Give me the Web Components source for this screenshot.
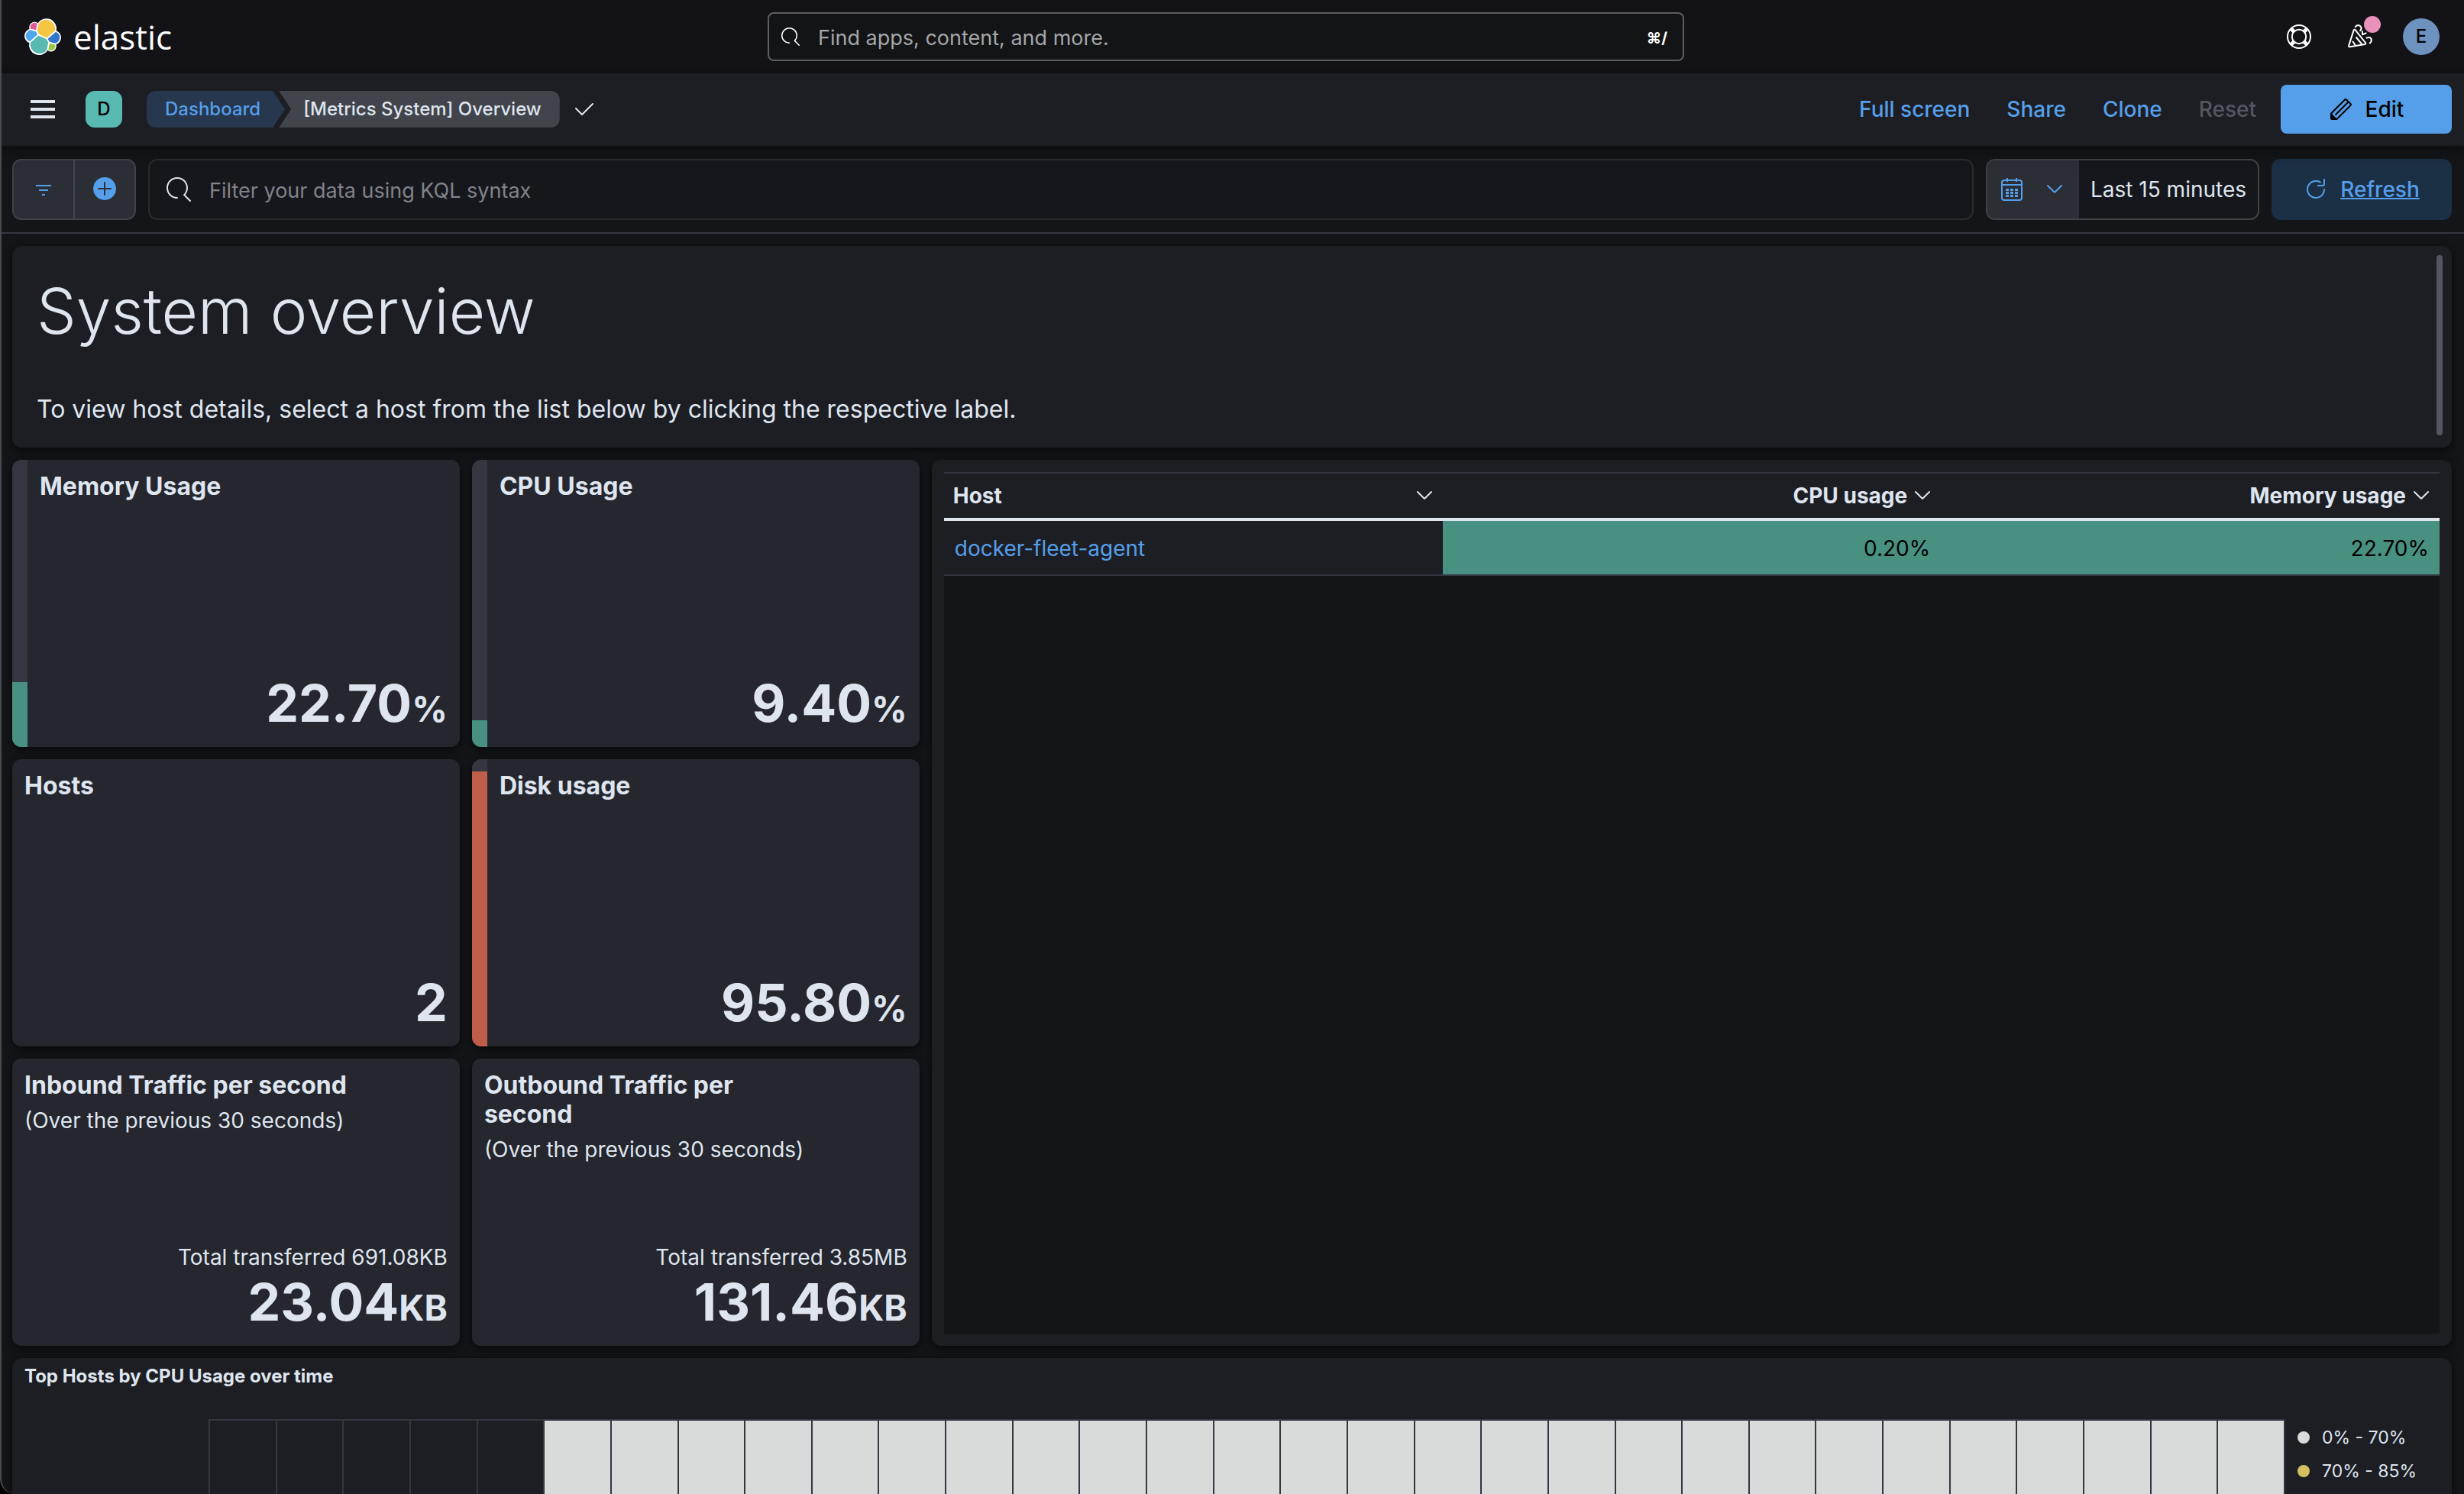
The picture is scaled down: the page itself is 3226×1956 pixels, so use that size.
<!DOCTYPE html>
<html lang="en">
<head>
<meta charset="utf-8">
<title>[Metrics System] Overview</title>
<style>
  :root {
    --page: #141519;
    --panel: #1d1e24;
    --tile: #25262e;
    --text: #dfe5ef;
    --link: #559fea;
    --line: #343741;
    --good: #489181;
    --bad: #bf5d4b;
  }
  html, body { margin: 0; height: 100%; }
  body {
    overflow: hidden;
    background: var(--page);
    color: var(--text);
    font-family: Inter, "Liberation Sans", sans-serif;
    font-size: 28px;
    line-height: 40px;
  }
</style>
</head>
<body>
<dashboard-app></dashboard-app>

<script>
const define = (name, markup, setup) => {
  const template = document.createElement('template');
  template.innerHTML = markup;
  customElements.define(name, class extends HTMLElement {
    constructor() {
      super();
      this.attachShadow({ mode: 'open' }).append(template.content.cloneNode(true));
    }
    connectedCallback() { if (setup) setup(this, this.shadowRoot); }
  });
};

const controls = `
  *, *::before, *::after { box-sizing: border-box; }
  button, input { font: inherit; color: inherit; background: none; border: 0; margin: 0; padding: 0; }
  button { display: flex; align-items: center; justify-content: center; cursor: pointer; }
  input { outline: 0; min-width: 0; padding-top: 4px; font-size: 27px; }
`;

const icons = {
  elastic: ['0 0 32 32', `
    <path fill="#fff" d="M32 16.77a6.334 6.334 0 00-1.14-3.63 6.298 6.298 0 00-3.005-2.34 9.098 9.098 0 00-.873-5.965A9.05 9.05 0 0022.56.746a9.007 9.007 0 00-6.014-.226 9.04 9.04 0 00-4.79 3.656 4.795 4.795 0 00-5.803-.02 4.85 4.85 0 00-1.596 2.34 4.868 4.868 0 00.03 2.838 6.365 6.365 0 00-3.14 2.334A6.39 6.39 0 000 15.379a6.34 6.34 0 001.145 3.644 6.304 6.304 0 003.02 2.344 9.07 9.07 0 00.866 5.957 9.025 9.025 0 004.43 4.078 8.977 8.977 0 006.011.217 9.01 9.01 0 004.779-3.663 4.785 4.785 0 005.8.02 4.84 4.84 0 001.597-2.337 4.857 4.857 0 00-.027-2.835 6.352 6.352 0 003.138-2.333 6.377 6.377 0 001.242-3.701z"/>
    <path fill="#f4c644" d="M12.58 13.787l7.002 3.211 7.066-6.213a7.849 7.849 0 00.152-1.557 7.944 7.944 0 00-1.54-4.704 7.897 7.897 0 00-4.02-2.869 7.87 7.87 0 00-4.932.086 7.9 7.9 0 00-3.92 3.007l-1.174 6.118 1.367 2.92z"/>
    <path fill="#58bab2" d="M5.333 21.228A7.964 7.964 0 006.72 27.53a7.918 7.918 0 004.04 2.874 7.89 7.89 0 004.95-.097 7.92 7.92 0 003.926-3.03l1.166-6.102-1.556-2.985-7.03-3.211-6.883 6.25z"/>
    <path fill="#e0589a" d="M5.288 9.064l4.8 1.137L11.14 4.72a3.823 3.823 0 00-4.56-.028A3.864 3.864 0 005.13 6.714a3.86 3.86 0 00.158 2.35z"/>
    <path fill="#4fa5ee" d="M4.872 10.214a5.293 5.293 0 00-2.595 1.882 5.324 5.324 0 00-.142 6.124 5.287 5.287 0 002.505 1.997l6.733-6.101-1.235-2.65-5.266-1.252z"/>
    <path fill="#9bc83f" d="M20.873 27.277a3.736 3.736 0 002.285.785 3.783 3.783 0 003.101-1.63 3.813 3.813 0 00.451-3.484l-4.8-1.125-1.037 5.454z"/>
    <path fill="#3276cc" d="M21.848 20.563l5.28 1.238a5.34 5.34 0 002.622-1.938 5.37 5.37 0 001.013-3.106 5.31 5.31 0 00-.936-3.01 5.283 5.283 0 00-2.475-1.944l-6.904 6.07 1.4 2.69z"/>`],
  search: ['0 0 16 16', `<path d="M11.271 11.978l3.872 3.873a.502.502 0 00.708 0 .502.502 0 000-.708l-3.565-3.564c2.38-2.747 2.267-6.923-.342-9.532-2.73-2.73-7.17-2.73-9.898 0-2.728 2.729-2.728 7.17 0 9.9a6.955 6.955 0 004.949 2.05.5.5 0 000-1 5.96 5.96 0 01-4.242-1.757 6.01 6.01 0 010-8.486 6.004 6.004 0 018.484 0 6.01 6.01 0 010 8.486.5.5 0 00-.034.738z"/>`],
  help: ['0 0 32 32', `<g fill="none" stroke="currentColor"><circle cx="16" cy="16" r="15" stroke-width="2"/><circle cx="16" cy="16" r="9.2" stroke-width="2"/><path stroke-width="5" d="M5.8 5.8l3.6 3.6M26.2 5.8l-3.6 3.6M5.8 26.2l3.6-3.6M26.2 26.2l-3.6-3.6"/></g>`],
  cheer: ['0 0 32 32', `<g fill="none" stroke="currentColor" stroke-width="2" stroke-linecap="round" stroke-linejoin="round"><path d="M7.6 7.6L1.2 27.6q-.6 2 1.5 1.7L22.400 25.900q1.600-.5.6-1.900L9.600 7.100q-1.300-1.200-2 .5z"/><path d="M11 17l7 8.500M6.500 22.500l3.400 4.800M9.800 3Q13-.3 16 2q3 2.700.2 6M18.800 9l.2 4.200 4.600-1.800M24.500 17.600q4.300-1.600 6 1.200 1.200 3-1.800 5.700"/></g>`],
  menu: ['0 0 32 32', `<path d="M0 4h32v4H0zM0 14h32v4H0zM0 24h32v4H0z"/>`],
  check: ['0 0 16 16', `<path d="M6.500 12a.502.502 0 01-.354-.146l-4-4a.502.502 0 01.708-.708L6.500 10.793l6.646-6.647a.502.502 0 01.708.708l-7 7A.502.502 0 016.500 12z"/>`],
  pencil: ['0 0 16 16', `<path d="M12.148 3.148L11 2l-9 9v3h3l9-9-1.144-1.144-8.002 7.998a.502.502 0 01-.708-.708l8.002-7.998zM11 1c.256 0 .512.098.707.293l3 3a.999.999 0 010 1.414l-9 9A.997.997 0 015 15H2a1 1 0 01-1-1v-3c0-.265.105-.52.293-.707l9-9A.997.997 0 0111 1zM5 14H2v-3l3 3z"/>`],
  filter: ['0 0 32 32', `<path d="M6 10h20v2H6zM10 16h12v2H10zM14 22h4v2h-4z"/>`],
  plus: ['0 0 32 32', `<circle cx="16" cy="15" r="15"/><path fill="none" stroke="#2c2e36" stroke-width="2" stroke-linecap="round" d="M8 15h16M16 7v16"/>`],
  calendar: ['0 0 32 32', `<g fill="none" stroke="currentColor" stroke-width="2"><rect x="3" y="4" width="26" height="26" rx="3"/><path d="M3 10h26M10 1v5M22 1v5"/></g><path d="M8 15h4v3H8zM14 15h4v3h-4zM20 15h4v3h-4zM8 19h4v3H8zM14 19h4v3h-4zM20 19h4v3h-4zM8 23h4v3H8zM14 23h4v3h-4zM20 23h4v3h-4z"/>`],
  down: ['0 0 24 24', `<path fill="none" stroke="currentColor" stroke-width="2" stroke-linecap="round" stroke-linejoin="round" d="M3 7l8.300 8.300q.7.7 1.400 0L21 7"/>`],
  refresh: ['0 0 16 16', `<path d="M11.228 2.942a.5.5 0 11-.538.842A5 5 0 1013 8a.5.5 0 111 0 6 6 0 11-2.772-5.058zM14 1.500v3A1.500 1.500 0 0112.500 6h-3a.5.5 0 010-1h3a.5.5 0 00.5-.5v-3a.5.5 0 111 0z"/>`]
};

define('ui-icon', `
  <style>
    :host { display: block; flex: none; width: 32px; height: 32px; }
    :host([size="s"]) { width: 24px; height: 24px; }
    :host([size="l"]) { width: 48px; height: 48px; }
    svg { display: block; width: 100%; height: 100%; fill: currentColor; overflow: visible; }
  </style>
  <svg aria-hidden="true"></svg>`, (host, root) => {
  const [box, shape] = icons[host.getAttribute('name')];
  const svg = root.querySelector('svg');
  svg.setAttribute('viewBox', box);
  svg.innerHTML = shape;
});

define('app-header', `
  <style>
    ${controls}
    :host { display: flex; align-items: center; height: 96px; padding-right: 16px; background: #121217; color: #fff; }
    .side { flex: 1; display: flex; align-items: center; }
    .brand { display: flex; align-items: center; gap: 16px; margin-left: 32px; color: inherit; text-decoration: none; font: 400 44px/48px "Open Sans", sans-serif; }
    .search { flex: none; width: 1200px; height: 64px; display: flex; align-items: center; gap: 24px; padding: 0 20px 0 16px; border: 2px solid #5d5e61; border-radius: 8px; background: #131416; }
    .search input { flex: 1; }
    .search input::placeholder { color: #a5a6a9; opacity: 1; }
    .search span { padding-top: 4px; font-size: 20px; font-weight: 700; }
    .end { justify-content: flex-end; }
    .end button { width: 80px; height: 80px; }
    .news { position: relative; }
    .dot { position: absolute; top: 13px; right: 13px; width: 22px; height: 22px; border-radius: 50%; background: #e991bb; }
    .avatar { width: 48px; height: 48px; border-radius: 50%; background: #6d92bf; color: #000; font-size: 24px; font-weight: 500; line-height: 48px; }
  </style>
  <div class="side"><a class="brand" href="#"><ui-icon name="elastic" size="l"></ui-icon><span>elastic</span></a></div>
  <label class="search"><ui-icon name="search" size="s"></ui-icon><input type="text" placeholder="Find apps, content, and more." aria-label="Find apps, content, and more."><span>⌘/</span></label>
  <div class="side end">
    <button aria-label="Help"><ui-icon name="help"></ui-icon></button>
    <button class="news" aria-label="News"><ui-icon name="cheer"></ui-icon><span class="dot"></span></button>
    <button aria-label="Account"><span class="avatar">E</span></button>
  </div>`);

define('nav-crumb', `
  <style>
    :host { display: block; }
    a { display: block; height: 48px; padding: 0 32px 0 24px; border-radius: 12px 0 0 12px; background: #27374d; color: var(--link); font-size: 24px; font-weight: 500; line-height: 48px; text-decoration: none; white-space: nowrap;
        clip-path: polygon(0 0, calc(100% - 16px) 0, 100% 50%, calc(100% - 16px) 100%, 0 100%); }
    :host([current]) { margin-left: -8px; }
    :host([current]) a { padding: 0 24px 0 32px; border-radius: 0 12px 12px 0; background: #42444b; color: var(--text);
        clip-path: polygon(0 0, 100% 0, 100% 100%, 0 100%, 16px 50%); }
  </style>
  <a href="#"><slot></slot></a>`);

define('app-nav', `
  <style>
    ${controls}
    :host { position: relative; z-index: 1; display: flex; align-items: center; height: 96px; padding: 0 16px 0 40px; box-sizing: border-box; border-bottom: 2px solid #16171b; background: var(--panel); box-shadow: 0 2px 8px rgba(0,0,0,.4), 0 8px 20px rgba(0,0,0,.2); }
    .space { width: 48px; height: 48px; margin: 0 32px 0 40px; border-radius: 12px; background: #58bab2; color: #000; font-size: 24px; font-weight: 500; }
    nav { display: flex; }
    .saved { margin-left: 16px; }
    .actions { margin-left: auto; display: flex; align-items: center; gap: 48px; font-weight: 500; }
    .actions a { color: var(--link); text-decoration: none; }
    .actions button:disabled { color: #535761; }
    .actions .edit { width: 224px; height: 64px; margin-left: -16px; gap: 16px; border-radius: 8px; background: var(--link); color: #000; }
  </style>
  <button aria-label="Menu"><ui-icon name="menu"></ui-icon></button>
  <button class="space" aria-label="Space D">D</button>
  <nav aria-label="Breadcrumb"><nav-crumb>Dashboard</nav-crumb><nav-crumb current>[Metrics System] Overview</nav-crumb></nav>
  <ui-icon class="saved" name="check"></ui-icon>
  <div class="actions">
    <a href="#">Full screen</a><a href="#">Share</a><a href="#">Clone</a><button disabled>Reset</button>
    <button class="edit"><ui-icon name="pencil"></ui-icon>Edit</button>
  </div>`);

define('query-bar', `
  <style>
    ${controls}
    :host { display: flex; gap: 16px; padding: 16px; border-bottom: 2px solid var(--line); }
    .group { display: flex; height: 80px; border: 2px solid #404248; border-radius: 12px; overflow: hidden; }
    .filters { background: #2c2e36; color: var(--link); }
    .filters button { width: 78px; }
    .filters button + button { width: 80px; border-left: 2px solid #43454c; }
    .kql { flex: 1; align-items: center; gap: 24px; padding: 0 22px; border-color: #2a2b31; background: #16171c; }
    .kql input { flex: 1; }
    .kql input::placeholder { color: #81828a; opacity: 1; }
    .dates { background: #16171c; }
    .quick { gap: 28px; width: 120px; padding-right: 4px; background: #2c2e36; color: var(--link); }
    .range { width: 234px; white-space: nowrap; }
    .refresh { width: 236px; height: 80px; gap: 16px; border-radius: 12px; background: #1b2f45; color: var(--link); font-weight: 500; text-decoration: underline; text-decoration-thickness: 2px; }
  </style>
  <div class="group filters">
    <button aria-label="Filter menu"><ui-icon name="filter"></ui-icon></button>
    <button aria-label="Add filter"><ui-icon name="plus"></ui-icon></button>
  </div>
  <label class="group kql"><ui-icon name="search"></ui-icon><input type="text" placeholder="Filter your data using KQL syntax" aria-label="Filter your data using KQL syntax"></label>
  <div class="group dates">
    <button class="quick" aria-label="Date quick select"><ui-icon name="calendar"></ui-icon><ui-icon name="down" size="s"></ui-icon></button>
    <button class="range">Last 15 minutes</button>
  </div>
  <button class="refresh"><ui-icon name="refresh"></ui-icon>Refresh</button>`);

define('dash-panel', `
  <style>
    :host { display: flex; flex-direction: column; min-width: 0; box-sizing: border-box; overflow: hidden; border-radius: 12px; background: var(--panel); box-shadow: 0 2px 6px rgba(0,0,0,.4), 0 6px 16px rgba(0,0,0,.3); }
  </style>
  <slot></slot>`);

define('intro-note', `
  <style>
    :host { display: flex; justify-content: space-between; flex: 1; padding: 12px 12px 16px 32px; }
    h1 { margin: 22px 0 0; font-size: 82px; font-weight: 300; line-height: 104px; }
    p { margin: 52px 0 0; font-size: 32px; line-height: 48px; }
    .thumb { width: 8px; border-radius: 4px; background: #535660; }
  </style>
  <div><h1>System overview</h1><p>To view host details, select a host from the list below by clicking the respective label.</p></div>
  <div class="thumb"></div>`);

define('metric-tile', `
  <style>
    :host { display: flex; flex: 1; background: var(--tile); }
    .track { display: flex; flex-direction: column; justify-content: flex-end; width: 20px; background: var(--line); }
    .track[hidden] { display: none; }
    .body { flex: 1; min-width: 0; display: flex; flex-direction: column; padding: 16px; }
    h2 { max-width: 80%; margin: 0; font-size: 32px; font-weight: 700; line-height: 38px; }
    .sub { margin: 10px 0 0; line-height: 34px; }
    .extra { margin: auto 0 0; line-height: 32px; text-align: right; }
    .value { margin: 0; font-size: 68px; font-weight: 700; line-height: 84px; text-align: right; }
    .unit { font-size: 46px; line-height: 46px; }
  </style>
  <div class="track"><div class="fill"></div></div>
  <div class="body"><h2></h2><p class="sub"></p><p class="extra"></p><p class="value"><span class="number"></span><span class="unit"></span></p></div>`,
(host, root) => {
  const put = (selector, name) => { root.querySelector(selector).textContent = host.getAttribute(name) || ''; };
  put('h2', 'label'); put('.sub', 'sub'); put('.extra', 'extra'); put('.number', 'value'); put('.unit', 'unit');
  const track = root.querySelector('.track');
  const fill = root.querySelector('.fill');
  track.hidden = !host.hasAttribute('progress');
  fill.style.height = host.getAttribute('progress') + '%';
  fill.style.background = `var(--${host.getAttribute('tone') || 'good'})`;
});

define('host-table', `
  <style>
    ${controls}
    :host { display: block; flex: 1; margin: 16px; background: var(--page); }
    table { width: 100%; table-layout: fixed; border-spacing: 0; background: var(--panel); }
    th { height: 64px; padding: 0 12px; border-top: 2px solid var(--line); border-bottom: 4px solid #dfe5ef; font-weight: 700; text-align: left; }
    th button { width: 100%; gap: 8px; justify-content: flex-end; }
    th:first-child button { justify-content: space-between; }
    td { height: 72px; padding: 2px 14px 0; border-bottom: 2px solid var(--line); }
    td.num { background: var(--good) padding-box; color: #000; text-align: right; }
    a { color: var(--link); text-decoration: none; }
  </style>
  <table>
    <thead><tr>
      <th><button>Host<ui-icon name="down" size="s"></ui-icon></button></th>
      <th><button>CPU usage<ui-icon name="down" size="s"></ui-icon></button></th>
      <th><button>Memory usage<ui-icon name="down" size="s"></ui-icon></button></th>
    </tr></thead>
    <tbody><tr><td><a href="#">docker-fleet-agent</a></td><td class="num">0.20%</td><td class="num">22.70%</td></tr></tbody>
  </table>`);

define('heat-map', `
  <style>
    :host { display: flex; flex: 1; flex-direction: column; font-size: 23px; }
    h2 { margin: 0; padding: 6px 16px 0; font-size: 24px; font-weight: 700; line-height: 36px; }
    .chart { flex: 1; display: flex; gap: 16px; margin: 38px 16px 0 257px; }
    .cells { flex: 1; display: grid; grid-template-columns: repeat(31, minmax(0, 1fr)); border: 2px solid var(--line); border-left: 0; }
    .cells i { border-left: 2px solid var(--line); }
    .cells i:nth-child(n + 6) { background: #d9dbda; }
    ul { width: 188px; margin: 10px 0 0; padding: 0; list-style: none; }
    ul { width: 186px; }
    li { display: flex; align-items: center; gap: 16px; height: 44px; line-height: 32px; box-sizing: border-box; padding-bottom: 16px; }
    li::before { content: ""; width: 16px; height: 16px; border-radius: 50%; background: var(--dot); }
  </style>
  <h2>Top Hosts by CPU Usage over time</h2>
  <div class="chart">
    <div class="cells"></div>
    <ul><li style="--dot:#d9dbda">0% - 70%</li><li style="--dot:#d2c063">70% - 85%</li></ul>
  </div>`, (host, root) => {
  const cells = root.querySelector('.cells');
  for (let i = 0; i < 31; i++) cells.append(document.createElement('i'));
});

define('dashboard-app', `
  <style>
    :host { display: block; min-height: 100%; }
    main { display: grid; grid-template-columns: repeat(48, minmax(0, 1fr)); grid-template-rows: 264px repeat(3, 376px) 376px; gap: 16px; padding: 16px; }
    .wide { grid-column: span 48; }
    .tile { grid-column: span 9; }
    .hosts { grid-column: 19 / -1; grid-row: 2 / span 3; }
    .frame { position: fixed; inset: 0; border-left: 2px solid #4a4b50; border-bottom-left-radius: 20px; box-shadow: 0 0 0 20px #000; pointer-events: none; z-index: 2; }
  </style>
  <app-header></app-header>
  <app-nav></app-nav>
  <query-bar></query-bar>
  <main>
    <dash-panel class="wide"><intro-note></intro-note></dash-panel>
    <dash-panel class="tile"><metric-tile label="Memory Usage" value="22.70" unit="%" progress="22.7"></metric-tile></dash-panel>
    <dash-panel class="tile"><metric-tile label="CPU Usage" value="9.40" unit="%" progress="9.4"></metric-tile></dash-panel>
    <dash-panel class="hosts"><host-table></host-table></dash-panel>
    <dash-panel class="tile"><metric-tile label="Hosts" value="2"></metric-tile></dash-panel>
    <dash-panel class="tile"><metric-tile label="Disk usage" value="95.80" unit="%" progress="95.8" tone="bad"></metric-tile></dash-panel>
    <dash-panel class="tile"><metric-tile label="Inbound Traffic per second" sub="(Over the previous 30 seconds)" extra="Total transferred 691.08KB" value="23.04" unit="KB"></metric-tile></dash-panel>
    <dash-panel class="tile"><metric-tile label="Outbound Traffic per second" sub="(Over the previous 30 seconds)" extra="Total transferred 3.85MB" value="131.46" unit="KB"></metric-tile></dash-panel>
    <dash-panel class="wide"><heat-map></heat-map></dash-panel>
  </main>
  <div class="frame"></div>`);
</script>
</body>
</html>
